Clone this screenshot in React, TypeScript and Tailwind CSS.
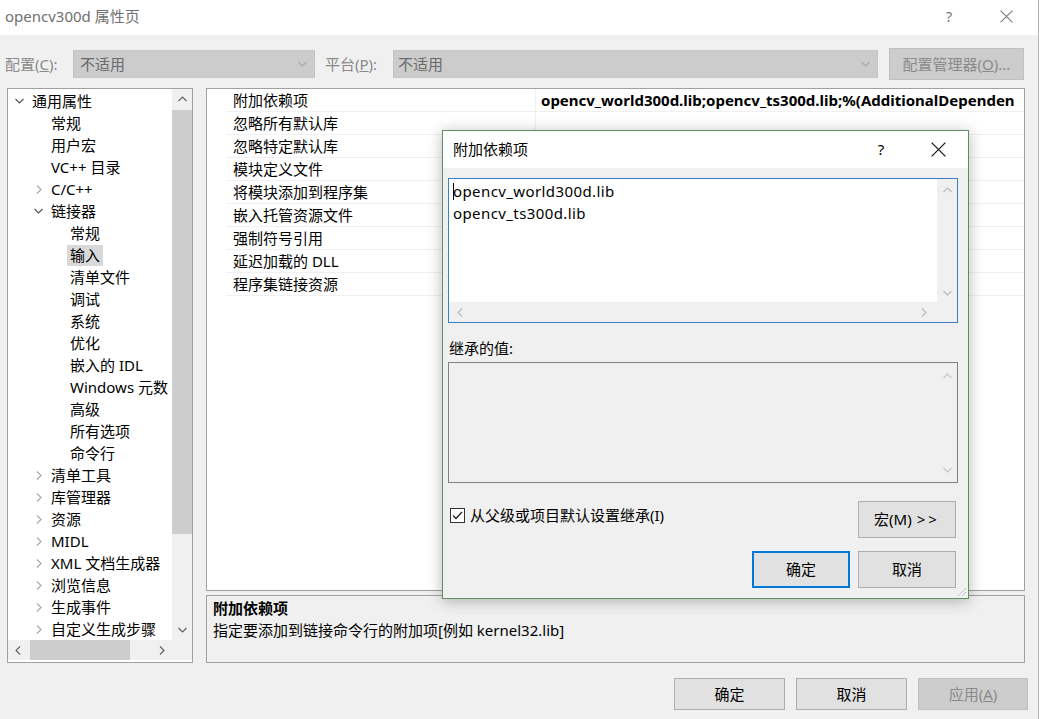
import React from 'react';

type Dir = 'up' | 'down' | 'left' | 'right';

const Chev = ({ dir, color = '#606060' }: { dir: Dir; color?: string }) => {
  const pts: Record<Dir, string> = {
    up: '0.5,5 4.5,1 8.5,5',
    down: '0.5,1 4.5,5 8.5,1',
    left: '5,0.5 1,4.5 5,8.5',
    right: '1,0.5 5,4.5 1,8.5',
  };
  const vertical = dir === 'up' || dir === 'down';
  return (
    <svg width={vertical ? 9 : 6} height={vertical ? 6 : 9} viewBox={vertical ? '0 0 9 6' : '0 0 6 9'}>
      <polyline points={pts[dir]} fill="none" stroke={color} strokeWidth="1.1" />
    </svg>
  );
};

const XIcon = ({ size, color }: { size: number; color: string }) => (
  <svg width={size} height={size} viewBox="0 0 12 12">
    <path d="M0.5 0.5 L11.5 11.5 M11.5 0.5 L0.5 11.5" stroke={color} strokeWidth="1" />
  </svg>
);

interface TreeItem {
  t: string;
  l: 0 | 1 | 2;
  e?: 'open' | 'closed';
  sel?: boolean;
}

const tree: TreeItem[] = [
  { t: '通用属性', l: 0, e: 'open' },
  { t: '常规', l: 1 },
  { t: '用户宏', l: 1 },
  { t: 'VC++ 目录', l: 1 },
  { t: 'C/C++', l: 1, e: 'closed' },
  { t: '链接器', l: 1, e: 'open' },
  { t: '常规', l: 2 },
  { t: '输入', l: 2, sel: true },
  { t: '清单文件', l: 2 },
  { t: '调试', l: 2 },
  { t: '系统', l: 2 },
  { t: '优化', l: 2 },
  { t: '嵌入的 IDL', l: 2 },
  { t: 'Windows 元数', l: 2 },
  { t: '高级', l: 2 },
  { t: '所有选项', l: 2 },
  { t: '命令行', l: 2 },
  { t: '清单工具', l: 1, e: 'closed' },
  { t: '库管理器', l: 1, e: 'closed' },
  { t: '资源', l: 1, e: 'closed' },
  { t: 'MIDL', l: 1, e: 'closed' },
  { t: 'XML 文档生成器', l: 1, e: 'closed' },
  { t: '浏览信息', l: 1, e: 'closed' },
  { t: '生成事件', l: 1, e: 'closed' },
  { t: '自定义生成步骤', l: 1, e: 'closed' },
];

const indent = ['pl-[2px]', 'pl-[21px]', 'pl-[40px]'];

const props = [
  '附加依赖项',
  '忽略所有默认库',
  '忽略特定默认库',
  '模块定义文件',
  '将模块添加到程序集',
  '嵌入托管资源文件',
  '强制符号引用',
  '延迟加载的 DLL',
  '程序集链接资源',
];

const WinButton = ({ children, disabled, primary, className = '' }: { children: React.ReactNode; disabled?: boolean; primary?: boolean; className?: string }) => (
  <div
    className={`flex items-center justify-center text-[15px] ${
      disabled
        ? 'bg-[#cccccc] border border-[#bfbfbf] text-[#8a8a8a]'
        : primary
        ? 'bg-[#e1e1e1] border-2 border-[#0078d7] text-black'
        : 'bg-[#e1e1e1] border border-[#adadad] text-black'
    } ${className}`}
  >
    {children}
  </div>
);

export default function App() {
  return (
    <div className="relative w-[1039px] h-[719px] overflow-hidden bg-[#f0f0f0] font-['Noto_Sans','Noto_Sans_CJK_SC',sans-serif] text-[15px] text-black flex flex-col border-r border-[#b5b5b5]">
      {/* Title bar */}
      <div className="h-[35px] bg-white flex items-center pl-[5px] pb-[3px] text-[#707070]">
        <span>opencv300d 属性页</span>
        <span className="ml-auto w-[20px] text-center text-[#808080]">?</span>
        <span className="ml-[37px] mr-[22px] w-[20px] flex justify-center">
          <XIcon size={13} color="#7a7a7a" />
        </span>
      </div>

      {/* Toolbar */}
      <div className="h-[53px] flex items-start px-[5px] shrink-0">
        <div className="mt-[15px] h-[28px] w-[68px] leading-[28px] text-[#8a8a8a] whitespace-nowrap">
          配置(<span className="underline">C</span>):
        </div>
        <div className="mt-[15px] h-[28px] w-[242px] bg-[#cccccc] border border-[#c6c6c6] flex items-center pl-[6px] pr-[7px] text-[#6a6a6a]">
          <span>不适用</span>
          <span className="ml-auto"><Chev dir="down" color="#a8a8a8" /></span>
        </div>
        <div className="mt-[15px] ml-[10px] h-[28px] w-[68px] leading-[28px] text-[#8a8a8a] whitespace-nowrap">
          平台(<span className="underline">P</span>):
        </div>
        <div className="mt-[15px] h-[28px] w-[485px] bg-[#cccccc] border border-[#c6c6c6] flex items-center pl-[4px] pr-[7px] text-[#6a6a6a]">
          <span>不适用</span>
          <span className="ml-auto"><Chev dir="down" color="#a8a8a8" /></span>
        </div>
        <WinButton disabled className="mt-[13px] ml-[11px] h-[32px] w-[135px] whitespace-nowrap">
          配置管理器(<span className="underline">O</span>)...
        </WinButton>
      </div>

      {/* Main panels */}
      <div className="h-[575px] flex pl-[7px] shrink-0">
        {/* Tree */}
        <div className="w-[186px] border border-[#a0a0a0] bg-white flex flex-col">
          <div className="flex-1 flex min-h-0">
            <div className="flex-1 overflow-hidden pt-[1px]">
              {tree.map((it, i) => (
                <div key={i} className={`h-[22px] flex items-center whitespace-nowrap ${indent[it.l]}`}>
                  <span className="w-[19px] flex justify-center shrink-0">
                    {it.e === 'open' && <Chev dir="down" color="#505050" />}
                    {it.e === 'closed' && <Chev dir="right" color="#a6a6a6" />}
                  </span>
                  <span className={`px-[3px] leading-[21px] ${it.sel ? 'bg-[#d9d9d9]' : ''}`}>{it.t}</span>
                </div>
              ))}
            </div>
            <div className="w-[20px] bg-[#f0f0f0] flex flex-col">
              <div className="h-[20px] flex items-center justify-center">
                <Chev dir="up" color="#606060" />
              </div>
              <div className="mt-[1px] h-[424px] bg-[#cdcdcd]" />
              <div className="flex-1" />
              <div className="h-[20px] flex items-center justify-center">
                <Chev dir="down" color="#606060" />
              </div>
            </div>
          </div>
          <div className="h-[20px] flex bg-[#f0f0f0] mb-[2px]">
            <div className="w-[20px] flex items-center justify-center">
              <Chev dir="left" color="#606060" />
            </div>
            <div className="ml-[2px] w-[100px] bg-[#cdcdcd]" />
            <div className="flex-1" />
            <div className="w-[20px] flex items-center justify-center">
              <Chev dir="right" color="#606060" />
            </div>
            <div className="w-[20px]" />
          </div>
        </div>

        {/* Right column */}
        <div className="ml-[13px] w-[819px] flex flex-col">
          <div className="h-[503px] border border-[#a0a0a0] bg-white overflow-hidden">
            {props.map((p, i) => (
              <div key={p} className="h-[23px] flex">
                <div className="w-[19px] shrink-0" />
                <div className="w-[309px] shrink-0 pl-[7px] leading-[22px] border-b border-[#f0f0f0] whitespace-nowrap">{p}</div>
                <div className="flex-1 pl-[5px] leading-[22px] border-b border-l border-[#f0f0f0] whitespace-nowrap overflow-hidden font-bold">
                  {i === 0 ? 'opencv_world300d.lib;opencv_ts300d.lib;%(AdditionalDependen' : ''}
                </div>
              </div>
            ))}
          </div>
          <div className="mt-[4px] h-[68px] border border-[#a0a0a0] bg-[#f0f0f0] pl-[6px] pt-[1px]">
            <div className="leading-[22px] font-bold">附加依赖项</div>
            <div className="leading-[22px]">指定要添加到链接命令行的附加项[例如 kernel32.lib]</div>
          </div>
        </div>
      </div>

      {/* Bottom buttons */}
      <div className="flex-1 flex justify-end items-start pt-[15px] pr-[10px] gap-[11px]">
        <WinButton className="w-[111px] h-[32px]">确定</WinButton>
        <WinButton className="w-[111px] h-[32px]">取消</WinButton>
        <WinButton disabled className="w-[110px] h-[32px]">
          应用(<span className="underline">A</span>)
        </WinButton>
      </div>

      {/* Dialog */}
      <div className="absolute left-[442px] top-[130px] w-[527px] h-[469px] border border-[#5f8e5f] bg-[#f0f0f0] shadow-[0_2px_14px_rgba(0,0,0,0.28)] flex flex-col">
        <div className="h-[37px] bg-white flex items-center pl-[10px]">
          <span>附加依赖项</span>
          <span className="ml-auto w-[20px] text-center">?</span>
          <span className="ml-[37px] mr-[20px] w-[20px] flex justify-center">
            <XIcon size={15} color="#1a1a1a" />
          </span>
        </div>
        <div className="flex-1 flex flex-col pl-[5px] pr-[10px] pt-[10px]">
          {/* Edit box */}
          <div className="h-[145px] border border-[#3c7fc1] bg-white flex flex-col">
            <div className="flex-1 flex min-h-0">
              <div className="flex-1 pl-[4px] pt-[1px] leading-[22px] tracking-[0.4px]">
                <div className="flex items-center">
                  <span className="w-[1px] h-[17px] bg-black -mr-[1px]" />
                  <span>opencv_world300d.lib</span>
                </div>
                <div>opencv_ts300d.lib</div>
              </div>
              <div className="w-[20px] bg-[#f0f0f0] flex flex-col items-center pt-[8px] pb-[6px]">
                <Chev dir="up" color="#b8b8b8" />
                <div className="flex-1" />
                <Chev dir="down" color="#b8b8b8" />
              </div>
            </div>
            <div className="h-[20px] bg-[#f0f0f0] flex items-center pl-[8px] pr-[30px]">
              <Chev dir="left" color="#b8b8b8" />
              <div className="flex-1" />
              <Chev dir="right" color="#b8b8b8" />
            </div>
          </div>

          <div className="mt-[15px] h-[20px] leading-[20px] pl-[1px]">继承的值:</div>

          {/* Inherited box */}
          <div className="mt-[4px] h-[121px] border border-[#828282] bg-[#f0f0f0] flex">
            <div className="flex-1" />
            <div className="w-[20px] flex flex-col items-center pt-[10px] pb-[9px]">
              <Chev dir="up" color="#c4c4c4" />
              <div className="flex-1" />
              <Chev dir="down" color="#c4c4c4" />
            </div>
          </div>

          <div className="mt-[18px] flex items-start">
            <div className="mt-[3px] h-[22px] flex items-center ml-[2px]">
              <span className="w-[15px] h-[15px] bg-white border border-[#333333] flex items-center justify-center">
                <svg width="11" height="9" viewBox="0 0 11 9">
                  <polyline points="1,4.5 4,7.5 10,1" fill="none" stroke="#222" strokeWidth="1.3" />
                </svg>
              </span>
              <span className="ml-[5px]">从父级或项目默认设置继承(I)</span>
            </div>
            <WinButton className="ml-auto mr-[2px] w-[98px] h-[37px]">
              宏(M) <span className="ml-[5px] tracking-[3px]">&gt;&gt;</span>
            </WinButton>
          </div>

          <div className="mt-[13px] flex justify-end gap-[8px] mr-[2px]">
            <WinButton primary className="w-[98px] h-[37px]">确定</WinButton>
            <WinButton className="w-[98px] h-[37px]">取消</WinButton>
          </div>
        </div>
        <svg className="absolute right-[1px] bottom-[1px]" width="12" height="12" viewBox="0 0 12 12">
          <path d="M11 3 L3 11 M11 7 L7 11" stroke="#9a9a9a" strokeWidth="1" strokeDasharray="1 1" />
        </svg>
      </div>
    </div>
  );
}
